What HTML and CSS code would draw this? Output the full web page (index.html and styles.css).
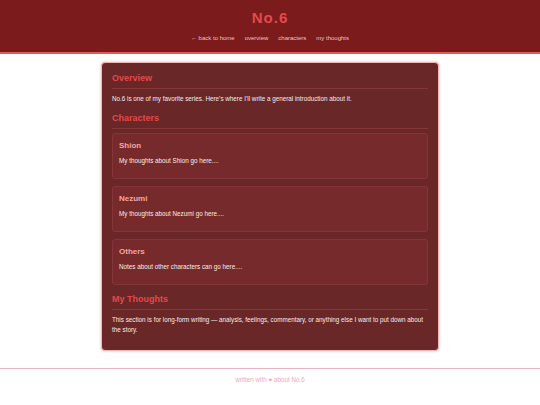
FILE: index.html
```html
<!DOCTYPE html>
<html lang="en">
<head>
<meta charset="utf-8">
<title>No.6</title>
<link rel="stylesheet" href="styles.css">
</head>
<body>
<header class="site-header">
  <h1 class="site-title">No.6</h1>
  <nav class="site-nav">
    <a href="#">← back to home</a>
    <a href="#overview">overview</a>
    <a href="#characters">characters</a>
    <a href="#thoughts">my thoughts</a>
  </nav>
</header>
<main class="card">
  <section id="overview">
    <h2 class="section-title">Overview</h2>
    <p class="text">No.6 is one of my favorite series. Here’s where I’ll write a general introduction about it.</p>
  </section>
  <section id="characters">
    <h2 class="section-title">Characters</h2>
    <div class="char-list">
      <div class="char-card">
        <h3 class="char-name">Shion</h3>
        <p class="text">My thoughts about Shion go here....</p>
      </div>
      <div class="char-card">
        <h3 class="char-name">Nezumi</h3>
        <p class="text">My thoughts about Nezumi go here....</p>
      </div>
      <div class="char-card">
        <h3 class="char-name">Others</h3>
        <p class="text">Notes about other characters can go here....</p>
      </div>
    </div>
  </section>
  <section id="thoughts">
    <h2 class="section-title">My Thoughts</h2>
    <p class="text">This section is for long-form writing — analysis, feelings, commentary, or anything else I want to put down about the story.</p>
  </section>
</main>
<footer class="site-footer">written with ♥ about No.6</footer>
</body>
</html>
```
FILE: styles.css
```css
* { box-sizing: border-box; }
body {
  margin: 0;
  background: #ffffff;
  font-family: "Liberation Sans", Arial, sans-serif;
}
.site-header {
  background: #7b1b1c;
  border-bottom: 2px solid #e35a5c;
  padding: 9px 0 9px;
  text-align: center;
}
.site-title {
  margin: 0;
  font-size: 15px;
  line-height: 18px;
  font-weight: bold;
  letter-spacing: 1px;
  color: #e34a4c;
}
.site-nav {
  margin-top: 6px;
  display: flex;
  justify-content: center;
  gap: 10px;
  font-size: 6px;
  line-height: 10px;
}
.site-nav a {
  color: #f1c3c3;
  text-decoration: none;
}
.card {
  width: 338px;
  margin: 8px auto 0;
  padding: 9px 10px 15px;
  background: #6a2728;
  border: 1px solid #f1b8b8;
  border-radius: 4px;
  box-shadow: 0 0 3px rgba(240, 150, 150, 0.7);
}
.section-title {
  margin: 8px 0 0;
  padding-bottom: 4px;
  font-size: 9px;
  line-height: 12px;
  font-weight: bold;
  color: #e2474a;
  border-bottom: 1px solid #853738;
}
#overview .section-title { margin-top: 0; }
.text {
  margin: 5px 0 0;
  font-size: 6.3px;
  line-height: 10px;
  color: #f8eaea;
}
.char-list {
  margin-top: 4px;
  display: flex;
  flex-direction: column;
  gap: 7px;
}
.char-card {
  background: #762a2c;
  border: 1px solid #84353a;
  border-radius: 3px;
  padding: 7px 6px 12px;
}
.char-name {
  margin: 0;
  font-size: 8px;
  line-height: 10px;
  font-weight: bold;
  color: #f2a6a6;
}
.site-footer {
  margin-top: 17px;
  border-top: 1px solid #e9b5c0;
  padding-top: 6px;
  text-align: center;
  font-size: 6.3px;
  line-height: 10px;
  color: #f3a7b7;
}
```
